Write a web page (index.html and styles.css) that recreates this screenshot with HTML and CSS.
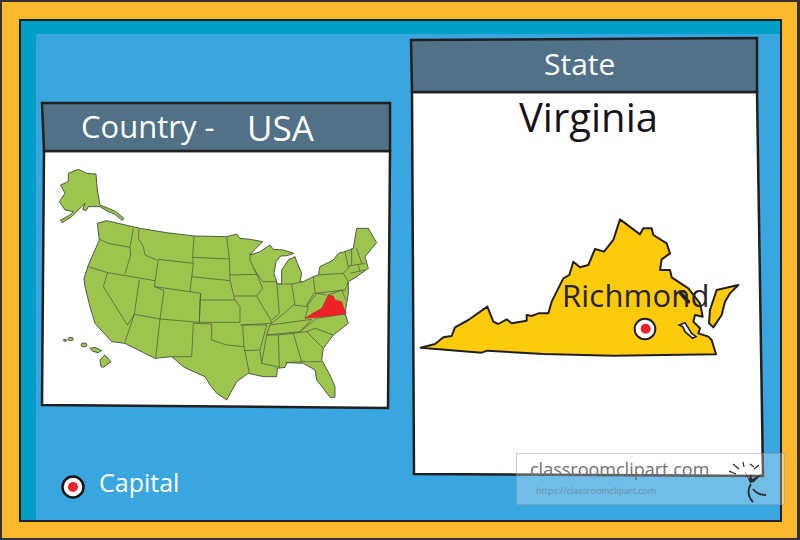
FILE: index.html
```html
<!DOCTYPE html>
<html lang="en">
<head>
<meta charset="utf-8">
<title>Virginia state map</title>
<link rel="stylesheet" href="styles.css">
</head>
<body>
<div class="frame">
  <div class="panel">
    <div class="field"></div>
  </div>

  <svg class="scene" width="800" height="540" viewBox="0 0 800 540" aria-hidden="true">
    <!-- left card -->
    <polygon class="card" points="44,151 390,151 388,408 42,405"/>
    <polygon class="card-head" points="42,103 390,103 390,151 44,151"/>
    <!-- right card -->
    <polygon class="card" points="412,92 757,92 763,476 414,474"/>
    <polygon class="card-head" points="411,40 757,38 757,92 412,92"/>

    <!-- USA map, traced at 3x -->
    <g transform="translate(40 160) scale(0.33333)">
      <path class="land" d="M85 40 L115 28 L140 40 L168 42 L172 90 L180 135 L205 145 L228 155 L252 176 L246 181 L225 163 L205 155 L180 140 L145 140 L138 152 L128 148 L135 130 L115 150 L95 170 L66 188 L62 180 L90 165 L100 155 L75 150 L58 125 L75 100 L62 75 L85 65 Z"/>
      <path class="land" d="M172 190 L200 182 L300 205 L380 218 L462 228 L560 230 L590 222 L600 235 L630 238 L668 245 L645 268 L630 285 L660 275 L690 255 L700 268 L730 270 L762 280 L740 287 L722 288 L708 305 L702 340 L712 372 L725 372 L725 330 L745 300 L765 290 L772 310 L785 340 L780 365 L790 365 L820 350 L835 345 L840 320 L880 300 L895 280 L915 275 L940 265 L950 205 L985 205 L1010 248 L975 290 L985 325 L950 350 L925 365 L925 400 L920 430 L915 460 L925 490 L880 525 L850 565 L845 600 L870 645 L885 680 L885 712 L870 712 L850 685 L830 660 L825 630 L790 610 L740 608 L735 622 L712 625 L710 650 L670 650 L625 640 L590 665 L560 720 L530 700 L510 675 L495 650 L450 630 L430 620 L395 590 L345 595 L255 550 L215 545 L165 490 L150 440 L135 380 L132 355 L145 315 L178 240 Z"/>
      <path class="lines" d="M178 238 L205 250 L270 262 M280 205 L270 262 L272 285 L255 342 M145 320 L203 338 L345 362 M297 207 L295 235 L310 260 L315 285 L350 300 M355 298 L460 310 L450 395 L343 380 Z M462 228 L458 292 L460 310 M458 292 L568 297 M560 230 L568 297 L570 362 M455 350 L570 362 L585 420 M450 395 L482 400 L480 420 L585 420 M372 392 L360 477 L478 487 L482 400 M480 420 L478 487 L600 487 L600 440 L585 420 M460 490 L515 492 L515 540 L560 555 L612 560 L608 495 M460 490 L455 590 M360 477 L347 595 M395 590 L455 590 M283 463 L360 477 M283 463 L255 545 M298 360 L283 463 M345 380 L372 392 M203 338 L190 380 L262 495 L283 463 M570 345 L650 343 L668 385 L650 408 L585 408 M650 408 L668 440 L690 475 L695 490 L600 495 M608 495 L680 495 L660 570 L612 572 M612 560 L628 640 M660 572 L665 610 L718 622 M680 525 L665 610 M680 525 L715 525 L718 622 M715 525 L760 520 L785 605 L735 608 M760 520 L800 515 L850 565 M785 605 L845 605 M800 515 L825 505 L880 525 M780 515 L830 475 L915 462 M690 495 L815 478 L780 515 L680 525 Z M695 490 L720 470 L760 435 L805 440 L795 475 M668 365 L710 365 L718 460 L695 480 M715 372 L755 372 L765 435 M755 372 L790 365 M820 350 L825 395 L800 435 M800 440 L830 400 L860 405 M835 345 L910 340 L925 365 L915 390 L825 400 M910 340 L930 320 M915 275 L925 322 M935 265 L935 315 M950 265 L965 310 M925 318 L975 310 M930 340 L975 330 M955 315 L960 335 M865 405 L905 390 L918 420 M630 280 L630 300 L650 343 M640 325 L668 365"/>
      <path class="virginia" d="M795 475 L815 462 L845 445 L865 405 L880 408 L885 420 L905 425 L918 462 L820 473 Z"/>
      <ellipse class="land" cx="75" cy="541" rx="5" ry="3"/>
      <ellipse class="land" cx="92" cy="537" rx="8" ry="5"/>
      <ellipse class="land" cx="132" cy="555" rx="9" ry="6"/>
      <path class="land" d="M150 565 L165 562 L185 572 L175 578 L158 574 Z"/>
      <path class="land" d="M180 600 L195 585 L213 605 L190 622 L183 620 Z"/>
    </g>

    <!-- Virginia, traced at 3x -->
    <g transform="translate(410 200) scale(0.33333)">
      <path class="va" d="M32 443 L75 432 L100 412 L125 408 L135 382 L175 360 L232 320 L250 365 L265 372 L290 358 L305 370 L350 362 L350 345 L365 348 L385 340 L415 340 L425 305 L460 235 L478 225 L490 185 L510 202 L535 195 L555 147 L582 155 L610 120 L630 58 L690 103 L700 85 L725 85 L730 105 L770 130 L780 160 L755 178 L750 210 L780 210 L785 232 L835 265 L870 310 L878 350 L855 345 L850 365 L870 385 L865 400 L895 410 L905 420 L918 463 L610 467 L400 462 L232 452 L215 458 Z"/>
      <path class="va" d="M920 270 L985 255 L960 280 L945 305 L935 345 L910 382 L897 370 L900 330 Z"/>
      <path class="river" d="M808 375 L825 368 L845 400 L858 410 L848 415 L825 395 L818 380 Z"/>
      <path class="river-dark" d="M812 280 L835 305"/>
      <circle class="mark-ring" cx="705" cy="387" r="31"/>
      <circle class="mark-dot" cx="707" cy="386" r="15"/>
    </g>

    <!-- legend marker -->
    <circle class="legend-ring" cx="73" cy="487" r="10.5"/>
    <circle class="legend-dot" cx="73" cy="487" r="5"/>
  </svg>

  <span class="label head country">Country -</span>
  <span class="label head usa">USA</span>
  <span class="label head state">State</span>
  <span class="label virginia-title">Virginia</span>
  <span class="label richmond">Richmond</span>
  <span class="label capital">Capital</span>

  <div class="watermark">
    <span class="wm-name">classroomclipart.com</span>
    <span class="wm-url">https://classroomclipart.com</span>
    <svg class="wm-logo" width="40" height="48" viewBox="0 0 40 48" aria-hidden="true">
      <path class="wm-rays" d="M0 16 L7 19 M4 9 L10 14 M14 7 L15 12 M21 9 L25 12 M30 10 L25 14"/>
      <path class="wm-body" d="M15 15 L20 24 L22 19 L23 24 L33 19 L25 27 L21 28 Z"/>
      <path class="wm-stem" d="M22 29 C18 35 19 42 24 47"/>
      <path class="wm-stem" d="M24 34 C27 38 31 40 37 40"/>
    </svg>
  </div>
</div>
</body>
</html>
```

FILE: styles.css
```css
html, body {
  margin: 0;
  padding: 0;
}

body {
  width: 800px;
  height: 540px;
  overflow: hidden;
  font-family: "Open Sans", "Noto Sans", sans-serif;
}

.frame {
  position: relative;
  width: 800px;
  height: 540px;
  box-sizing: border-box;
  display: flex;
  padding: 17px 15px 16px 17px;
  background: #fdb92e;
  border: 2px solid #333138;
  border-right-width: 3px;
}

.panel {
  flex: 1;
  display: flex;
  border: 2px solid #23202a;
  background: #00a0c6;
}

.field {
  flex: 1;
  margin: 13px 0 0 15px;
  background: #3aa6df;
}

.scene {
  position: absolute;
  left: -2px;
  top: -2px;
}

.card {
  fill: #fff;
  stroke: #231f20;
  stroke-width: 2.5;
}

.card-head {
  fill: #517286;
  stroke: #231f20;
  stroke-width: 2.5;
}

.land {
  fill: #9dc44d;
  stroke: #4c5a46;
  stroke-width: 3;
  stroke-linejoin: round;
}

.lines {
  fill: none;
  stroke: #4c5a46;
  stroke-width: 2.2;
  stroke-linejoin: round;
}

.virginia {
  fill: #ee2028;
  stroke: #b72a2a;
  stroke-width: 1.5;
}

.va {
  fill: #fecb0a;
  stroke: #231f20;
  stroke-width: 6;
  stroke-linejoin: round;
}

.river {
  fill: #fff;
  stroke: #231f20;
  stroke-width: 5;
}

.river-dark {
  fill: none;
  stroke: #231f20;
  stroke-width: 11;
  stroke-linecap: round;
}

.mark-ring {
  fill: #fff;
  stroke: #231f20;
  stroke-width: 6;
}

.mark-dot,
.legend-dot {
  fill: #ee2028;
}

.legend-ring {
  fill: #fff;
  stroke: #16141a;
  stroke-width: 2.5;
}

.label {
  position: absolute;
  white-space: nowrap;
  line-height: 1;
}

.head {
  color: #fff;
}

.country {
  left: 79px;
  top: 109px;
  font-size: 31px;
}

.usa {
  left: 245px;
  top: 108px;
  font-size: 35px;
}

.state {
  left: 542px;
  top: 47px;
  font-size: 30px;
}

.virginia-title {
  left: 517px;
  top: 95px;
  font-size: 40px;
  color: #16141a;
}

.richmond {
  left: 560px;
  top: 278px;
  font-size: 31px;
  letter-spacing: 0.2px;
  color: #262433;
}

.capital {
  left: 97px;
  top: 468px;
  font-size: 25px;
  color: #fff;
}

.watermark {
  position: absolute;
  left: 514px;
  top: 451px;
  width: 269px;
  height: 52px;
  box-sizing: border-box;
  display: flex;
  flex-direction: column;
  padding: 3px 0 0 13px;
  gap: 4px;
  background: rgba(255, 255, 255, 0.28);
  border: 1px solid rgba(120, 120, 120, 0.4);
}

.wm-name {
  font-size: 18px;
  line-height: 24px;
  color: #6f6f72;
}

.wm-url {
  padding-left: 6px;
  font-size: 9px;
  line-height: 12px;
  color: #6c8da6;
}

.wm-logo {
  position: absolute;
  right: 15px;
  top: 1px;
}

.wm-rays,
.wm-stem {
  fill: none;
  stroke: #2b2b2e;
  stroke-width: 1.2;
}

.wm-stem {
  stroke-width: 1.8;
}

.wm-body {
  fill: #2b2b2e;
}
```
